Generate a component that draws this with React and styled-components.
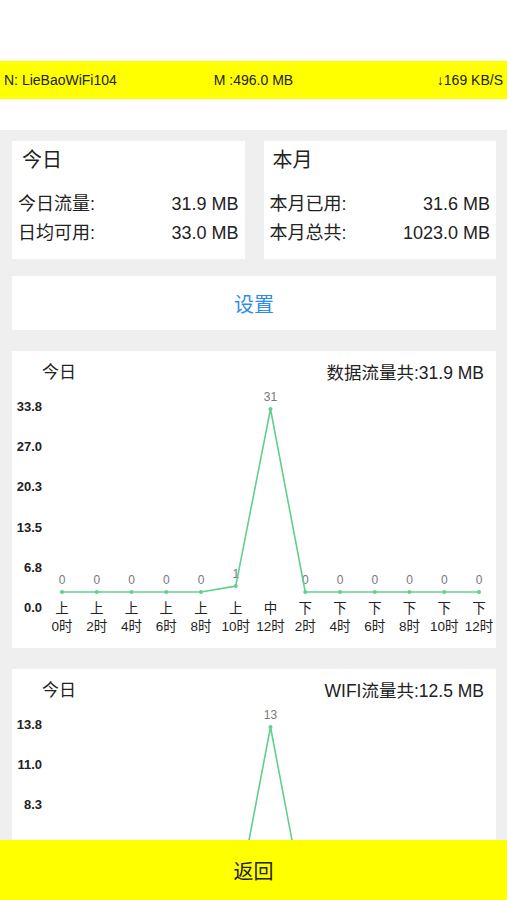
import styled, { createGlobalStyle } from "styled-components";

const Global = createGlobalStyle`
  body {
    margin: 0;
    font-family: "Liberation Sans", "Noto Sans CJK SC", sans-serif;
    color: #222;
  }
`;

const Page = styled.div`
  position: relative;
  width: 507px;
  height: 900px;
  overflow: hidden;
  background: #efefef;
`;

const Top = styled.div`
  background: #fff;
  padding: 61px 0 31px;
`;

const InfoBar = styled.div`
  height: 38px;
  background: #ffff00;
  display: grid;
  grid-template-columns: 1fr 1fr 1fr;
  align-items: center;
  padding: 0 4px;
  font-size: 14px;
  color: #222;
`;

const InfoItem = styled.span`
  text-align: ${(p) => p.align || "left"};
  white-space: nowrap;
`;

const Content = styled.div`
  padding: 11px 11px 0 12px;
`;

const StatsRow = styled.div`
  display: grid;
  grid-template-columns: 1fr 1fr;
  gap: 19px;
`;

const StatCard = styled.div`
  background: #fff;
  height: 118px;
  box-sizing: border-box;
  padding: 7px 6px 11px;
  display: flex;
  flex-direction: column;
  justify-content: space-between;
`;

const StatTitle = styled.div`
  font-size: 20px;
  line-height: 24px;
  padding-left: ${(p) => p.indent || 4}px;
`;

const StatRow = styled.div`
  display: flex;
  justify-content: space-between;
  font-size: 18px;
  line-height: 29px;
`;

const SettingsButton = styled.button`
  display: block;
  width: 100%;
  height: 54px;
  margin-top: 17px;
  border: none;
  background: #fff;
  color: #2f8cef;
  font-family: inherit;
  font-size: 20px;
`;

const ChartCard = styled.div`
  background: #fff;
  margin-top: 21px;
  height: 297px;
  box-sizing: border-box;
  padding-top: 10px;
`;

const ChartHeader = styled.div`
  display: flex;
  justify-content: space-between;
  align-items: center;
  padding: 0 12px 0 30px;
  font-size: 17.5px;
  line-height: 24px;
  margin-bottom: 14px;
`;

const ChartTitle = styled.span`
  font-size: 17px;
`;

const ChartBody = styled.div`
  display: flex;
`;

const YAxis = styled.div`
  width: 32px;
  height: 217px;
  box-sizing: border-box;
  padding-right: 2px;
  display: flex;
  flex-direction: column;
  justify-content: space-between;
  align-items: flex-end;
  font-size: 13px;
  font-weight: bold;
  line-height: 16px;
`;

const Plot = styled.div`
  width: 452px;

  svg {
    display: block;
    overflow: visible;
  }
`;

const XLabels = styled.div`
  display: grid;
  grid-template-columns: repeat(13, 34.75px);
  padding-left: 0.6px;
  font-size: 13.5px;
  line-height: 18px;
  color: #222;
`;

const XLabel = styled.div`
  text-align: center;
  white-space: nowrap;
`;

const BottomBar = styled.button`
  position: absolute;
  left: 0;
  right: 0;
  bottom: 0;
  height: 60px;
  border: none;
  background: #ffff00;
  color: #222;
  font-family: inherit;
  font-size: 20px;
`;

const hours = [
  ["上", "0时"], ["上", "2时"], ["上", "4时"], ["上", "6时"], ["上", "8时"],
  ["上", "10时"], ["中", "12时"], ["下", "2时"], ["下", "4时"], ["下", "6时"],
  ["下", "8时"], ["下", "10时"], ["下", "12时"],
];

function LineChart({ title, total, ticks, data }) {
  const max = Math.max(...data);
  const pts = data.map((v, i) => [18 + i * 34.75, 193 - (v / max) * 183]);
  return (
    <ChartCard>
      <ChartHeader>
        <ChartTitle>{title}</ChartTitle>
        <span>{total}</span>
      </ChartHeader>
      <ChartBody>
        <YAxis>
          {ticks.map((t) => (
            <span key={t}>{t}</span>
          ))}
        </YAxis>
        <Plot>
          <svg width="452" height="201">
            {data.map((v, i) => (
              <text
                key={"t" + i}
                x={pts[i][0]}
                y={pts[i][1] - 11}
                fontSize="12"
                fill="#777"
                textAnchor="middle"
                dominantBaseline="middle"
                fontFamily="Liberation Sans, sans-serif"
              >
                {v}
              </text>
            ))}
            <polyline
              points={pts.map((p) => p.join(",")).join(" ")}
              fill="none"
              stroke="#62cf8e"
              strokeWidth="1.6"
              strokeLinejoin="round"
            />
            {pts.map((p, i) => (
              <circle key={"c" + i} cx={p[0]} cy={p[1]} r="2" fill="#62cf8e" />
            ))}
          </svg>
          <XLabels>
            {hours.map(([a, b], i) => (
              <XLabel key={i}>
                {a}
                <br />
                {b}
              </XLabel>
            ))}
          </XLabels>
        </Plot>
      </ChartBody>
    </ChartCard>
  );
}

export default function App() {
  return (
    <Page>
      <Global />
      <Top>
        <InfoBar>
          <InfoItem>N: LieBaoWiFi104</InfoItem>
          <InfoItem align="center">M :496.0 MB</InfoItem>
          <InfoItem align="right">↓169 KB/S</InfoItem>
        </InfoBar>
      </Top>
      <Content>
        <StatsRow>
          <StatCard>
            <StatTitle indent={4}>今日</StatTitle>
            <div>
              <StatRow>
                <span>今日流量:</span>
                <span>31.9 MB</span>
              </StatRow>
              <StatRow>
                <span>日均可用:</span>
                <span>33.0 MB</span>
              </StatRow>
            </div>
          </StatCard>
          <StatCard>
            <StatTitle indent={3}>本月</StatTitle>
            <div>
              <StatRow>
                <span>本月已用:</span>
                <span>31.6 MB</span>
              </StatRow>
              <StatRow>
                <span>本月总共:</span>
                <span>1023.0 MB</span>
              </StatRow>
            </div>
          </StatCard>
        </StatsRow>
        <SettingsButton>设置</SettingsButton>
        <LineChart
          title="今日"
          total="数据流量共:31.9 MB"
          ticks={["33.8", "27.0", "20.3", "13.5", "6.8", "0.0"]}
          data={[0, 0, 0, 0, 0, 1, 31, 0, 0, 0, 0, 0, 0]}
        />
        <LineChart
          title="今日"
          total="WIFI流量共:12.5 MB"
          ticks={["13.8", "11.0", "8.3", "5.5", "2.8", "0.0"]}
          data={[0, 0, 0, 0, 0, 0, 13, 0, 0, 0, 0, 0, 0]}
        />
      </Content>
      <BottomBar>返回</BottomBar>
    </Page>
  );
}
